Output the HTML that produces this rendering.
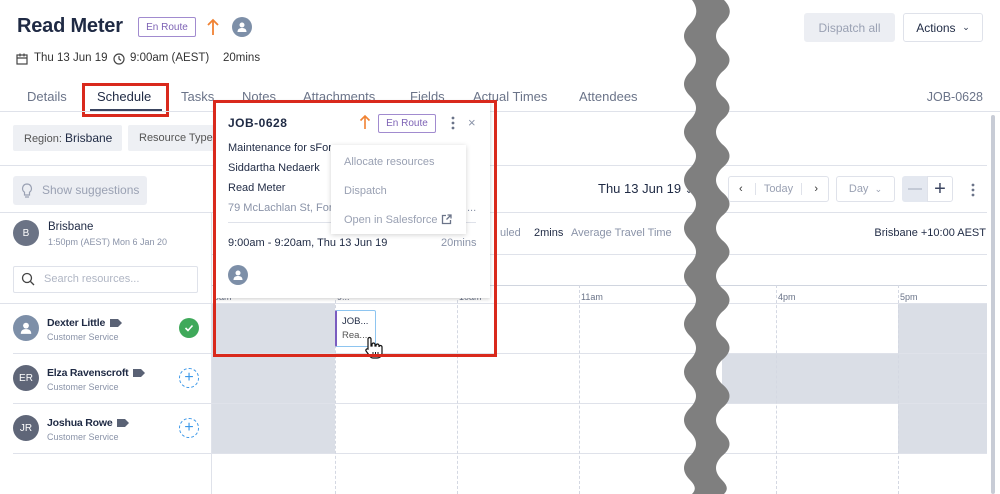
<!DOCTYPE html>
<html><head><meta charset="utf-8"><style>
*{box-sizing:border-box;margin:0;padding:0}
body{width:1000px;height:494px;overflow:hidden;background:#fff;font-family:"Liberation Sans",sans-serif;color:#1f2a44;position:relative}
.a{position:absolute;white-space:nowrap}
.hl{position:absolute;height:1px;background:#dfe2ea}
.vd{position:absolute;width:0;border-left:1px dashed #d4d8e2}
.gray{position:absolute;background:#dadee6}
.av{position:absolute;border-radius:50%;color:#fff;font-size:10px;display:flex;align-items:center;justify-content:center}
.muted{color:#8a93a8}
.btn{position:absolute;border:1px solid #dfe2ea;border-radius:3px;background:#fff;display:flex;align-items:center;justify-content:center;font-size:11px}
.badge{position:absolute;border:1px solid #a18bcf;border-radius:2px;color:#7d62b5;font-size:10px;display:flex;align-items:center;justify-content:center}
.nm{font-size:10.5px;font-weight:bold;letter-spacing:-0.2px;display:flex;align-items:center;gap:5px}
</style></head><body>

<!-- header -->
<div class="a" style="left:17px;top:15px;font-size:20px;font-weight:bold;letter-spacing:-0.2px">Read Meter</div>
<div class="badge" style="left:138px;top:17px;width:58px;height:20px">En Route</div>
<svg class="a" style="left:207px;top:18px" width="12" height="18" viewBox="0 0 12 18"><path d="M6 17V2M1 7l5-5 5 5" stroke="#f08233" stroke-width="1.8" fill="none"/></svg>
<div class="av" style="left:232px;top:17px;width:20px;height:20px;background:#7d8fa8"><svg width="12" height="12" viewBox="0 0 12 12"><circle cx="6" cy="4" r="2.5" fill="#fff"/><path d="M1.5 11c0-3 2-4 4.5-4s4.5 1 4.5 4z" fill="#fff"/></svg></div>

<svg class="a" style="left:16px;top:53px" width="12" height="12" viewBox="0 0 12 12"><rect x="1" y="2" width="10" height="9" fill="none" stroke="#444" stroke-width="1.2"/><path d="M1 5h10M4 0.5v3M8 0.5v3" stroke="#444" stroke-width="1.2"/></svg>
<div class="a" style="left:34px;top:52px;font-size:11.5px;color:#333">Thu 13 Jun 19</div>
<svg class="a" style="left:113px;top:53px" width="12" height="12" viewBox="0 0 12 12"><circle cx="6" cy="6" r="5" fill="none" stroke="#444" stroke-width="1.2"/><path d="M6 3v3l2 1.5" stroke="#444" stroke-width="1.2" fill="none"/></svg>
<div class="a" style="left:130px;top:52px;font-size:11.5px;color:#333">9:00am (AEST)</div>
<div class="a" style="left:223px;top:52px;font-size:11.5px;color:#333">20mins</div>

<div class="btn" style="left:804px;top:13px;width:91px;height:29px;background:#eceef3;border-color:#eceef3;color:#9aa1b3;font-size:12px">Dispatch all</div>
<div class="btn" style="left:903px;top:13px;width:80px;height:29px;font-size:12px;color:#1f2a44">Actions&nbsp;&nbsp;<span style="font-size:9px">&#8964;</span></div>

<!-- tabs -->
<div class="a muted" style="left:27px;top:89px;font-size:13px;color:#6b7489">Details</div>
<div class="a" style="left:97px;top:89px;font-size:13px;color:#1f2a44">Schedule</div>
<div class="a" style="left:90px;top:109px;width:72px;height:2px;background:#3b4560"></div>
<div class="a" style="left:82px;top:83px;width:87px;height:34px;border:3px solid #d9291c"></div>
<div class="a" style="left:181px;top:89px;font-size:13px;color:#6b7489">Tasks</div>
<div class="a" style="left:242px;top:89px;font-size:13px;color:#6b7489">Notes</div>
<div class="a" style="left:303px;top:89px;font-size:13px;color:#6b7489">Attachments</div>
<div class="a" style="left:410px;top:89px;font-size:13px;color:#6b7489">Fields</div>
<div class="a" style="left:473px;top:89px;font-size:13px;color:#6b7489">Actual Times</div>
<div class="a" style="left:579px;top:89px;font-size:13px;color:#6b7489">Attendees</div>
<div class="a" style="right:17px;top:90px;font-size:12.5px;color:#6b7489">JOB-0628</div>
<div class="hl" style="left:0;top:111px;width:1000px"></div>

<!-- filters -->
<div class="a" style="left:13px;top:125px;width:109px;height:26px;background:#eef0f4;border-radius:2px;font-size:11px;line-height:26px;padding-left:11px;color:#555">Region: <span style="color:#1f2a44;font-size:12px">Brisbane</span></div>
<div class="a" style="left:128px;top:125px;width:90px;height:26px;background:#eef0f4;border-radius:2px;font-size:11px;line-height:26px;padding-left:11px;color:#555;overflow:hidden">Resource Type: B</div>
<div class="hl" style="left:0;top:165px;width:987px"></div>

<div class="a" style="left:13px;top:176px;width:134px;height:29px;background:#eceef3;border-radius:3px;font-size:12px;line-height:29px;padding-left:29px;color:#9aa1b3">Show suggestions</div>
<svg class="a" style="left:21px;top:183px" width="12" height="16" viewBox="0 0 12 16"><path d="M6 1a4.5 4.5 0 0 0-2.5 8.2V12h5V9.2A4.5 4.5 0 0 0 6 1zM4 14h4" stroke="#9aa1b3" stroke-width="1.2" fill="none"/></svg>

<div class="a" style="left:598px;top:181px;font-size:13px;color:#1f2a44">Thu 13 Jun 19 <span style="font-size:10px">&#8964;</span></div>
<div class="btn" style="left:728px;top:176px;width:101px;height:26px;color:#9aa1b3;justify-content:space-between;padding:0 10px"><span style="color:#333">&#8249;</span><span style="border-left:1px solid #dfe2ea;border-right:1px solid #dfe2ea;padding:0 8px">Today</span><span style="color:#333">&#8250;</span></div>
<div class="btn" style="left:836px;top:176px;width:59px;height:26px;color:#9aa1b3">Day&nbsp;&nbsp;<span style="font-size:9px">&#8964;</span></div>
<div class="a" style="left:902px;top:176px;width:26px;height:26px;background:#e4e8f0;border-radius:3px 0 0 3px"></div>
<div class="a" style="left:908px;top:188px;width:14px;height:1.5px;background:#c4cad6"></div>
<div class="btn" style="left:927px;top:176px;width:26px;height:26px;font-size:20px;color:#3b4560;border-radius:0 3px 3px 0">+</div>
<svg class="a" style="left:970px;top:182px" width="6" height="16"><circle cx="3" cy="3" r="1.4" fill="#6b7489"/><circle cx="3" cy="8" r="1.4" fill="#6b7489"/><circle cx="3" cy="13" r="1.4" fill="#6b7489"/></svg>
<div class="hl" style="left:0;top:212px;width:987px"></div>

<div class="av" style="left:13px;top:220px;width:26px;height:26px;background:#6b7385">B</div>
<div class="a" style="left:48px;top:221px;font-size:11.5px">Brisbane</div>
<div class="a" style="left:48px;top:237px;font-size:9px;color:#8a93a8">1:50pm (AEST) Mon 6 Jan 20</div>
<div class="a" style="left:500px;top:227px;font-size:11px;color:#8a93a8">uled</div>
<div class="a" style="left:534px;top:227px;font-size:11px">2mins</div>
<div class="a" style="left:571px;top:227px;font-size:11px;color:#8a93a8">Average Travel Time</div>
<div class="a" style="right:14px;top:227px;font-size:11px">Brisbane +10:00 AEST</div>
<div class="hl" style="left:212px;top:254px;width:775px"></div>

<div class="a" style="left:13px;top:266px;width:185px;height:27px;border:1px solid #dfe2ea;border-radius:2px;font-size:11px;line-height:25px;padding-left:30px;color:#b0b6c4">Search resources...</div>
<svg class="a" style="left:21px;top:272px" width="14" height="14" viewBox="0 0 14 14"><circle cx="6" cy="6" r="4.5" stroke="#444" stroke-width="1.3" fill="none"/><path d="M9.5 9.5l3.5 3.5" stroke="#444" stroke-width="1.3"/></svg>

<!-- grid -->
<div class="a" style="left:211px;top:212px;width:1px;height:282px;background:#dfe2ea"></div>
<div class="hl" style="left:0;top:303px;width:987px"></div>
<div class="hl" style="left:212px;top:285px;width:775px;background:#d0d5df"></div>
<div class="gray" style="left:212px;top:304px;width:123px;height:149px"></div>
<div class="gray" style="left:898px;top:304px;width:89px;height:149px"></div>
<div class="gray" style="left:722px;top:353px;width:265px;height:50px"></div>
<div class="hl" style="left:13px;top:353px;width:974px"></div>
<div class="hl" style="left:13px;top:403px;width:974px"></div>
<div class="hl" style="left:13px;top:453px;width:974px"></div>
<div class="vd" style="left:335px;top:285px;height:209px"></div>
<div class="vd" style="left:457px;top:285px;height:209px"></div>
<div class="vd" style="left:579px;top:285px;height:209px"></div>
<div class="vd" style="left:776px;top:285px;height:209px"></div>
<div class="vd" style="left:898px;top:285px;height:209px"></div>
<div class="a" style="left:581px;top:292px;font-size:9px;color:#6b7489">11am</div>
<div class="a" style="left:778px;top:292px;font-size:9px;color:#6b7489">4pm</div>
<div class="a" style="left:900px;top:292px;font-size:9px;color:#6b7489">5pm</div>
<div class="a" style="left:214px;top:292px;font-size:9px;color:#6b7489">9am</div>
<div class="a" style="left:337px;top:292px;font-size:9px;color:#6b7489">9:..</div>
<div class="a" style="left:459px;top:292px;font-size:9px;color:#6b7489">10am</div>
<div class="a" style="left:991px;top:115px;width:4px;height:379px;background:#c8ccd6;border-radius:2px"></div>

<!-- resources -->
<div class="av" style="left:13px;top:315px;width:26px;height:26px;background:#7d8fa8"><svg width="14" height="14" viewBox="0 0 12 12"><circle cx="6" cy="4" r="2.5" fill="#fff"/><path d="M1.5 11c0-3 2-4 4.5-4s4.5 1 4.5 4z" fill="#fff"/></svg></div>
<div class="a nm" style="left:47px;top:317px">Dexter Little <svg width="12" height="8"><path d="M0 0h8l4 4-4 4H0z" fill="#5a6275"/></svg></div>
<div class="a" style="left:47px;top:332px;font-size:9px;color:#8a93a8">Customer Service</div>
<div class="av" style="left:179px;top:318px;width:20px;height:20px;background:#3fa95a"><svg width="10" height="10"><path d="M1.5 5l2.5 2.5 4.5-5" stroke="#fff" stroke-width="1.6" fill="none"/></svg></div>

<div class="av" style="left:13px;top:365px;width:26px;height:26px;background:#5f6678">ER</div>
<div class="a nm" style="left:47px;top:367px">Elza Ravenscroft <svg width="12" height="8"><path d="M0 0h8l4 4-4 4H0z" fill="#5a6275"/></svg></div>
<div class="a" style="left:47px;top:382px;font-size:9px;color:#8a93a8">Customer Service</div>
<div class="av" style="left:179px;top:368px;width:20px;height:20px;border:1px dashed #3b97e8;color:#3b97e8;font-size:16px">+</div>

<div class="av" style="left:13px;top:415px;width:26px;height:26px;background:#5f6678">JR</div>
<div class="a nm" style="left:47px;top:417px">Joshua Rowe <svg width="12" height="8"><path d="M0 0h8l4 4-4 4H0z" fill="#5a6275"/></svg></div>
<div class="a" style="left:47px;top:432px;font-size:9px;color:#8a93a8">Customer Service</div>
<div class="av" style="left:179px;top:418px;width:20px;height:20px;border:1px dashed #3b97e8;color:#3b97e8;font-size:16px">+</div>

<!-- job block -->
<div class="a" style="left:335px;top:310px;width:41px;height:37px;background:#fff;border:1px solid #8ec5f0;border-left:2px solid #7a5cc0;border-radius:2px;font-size:9.5px;padding:4px 0 0 5px;line-height:14px">JOB...<br><span style="color:#555">Rea...</span></div>
<svg class="a" style="left:363px;top:336px" width="20" height="24" viewBox="0 0 20 24"><path d="M5 13V3a1.5 1.5 0 0 1 3 0v7h1V8.5a1.5 1.5 0 0 1 3 0V10h1V9.5a1.5 1.5 0 0 1 3 0V11a1.5 1.5 0 0 1 3 0v6c0 3-2 5-5 5H10c-2 0-3-1-4-3l-3-4a1.5 1.5 0 0 1 2-2z" fill="#fff" stroke="#111" stroke-width="1.2"/><path d="M10 16v4M12.5 16v4M15 16v4" stroke="#111"/></svg>

<!-- popup -->
<div class="a" style="left:215px;top:101px;width:275px;height:197px;background:#fff;box-shadow:0 1px 4px rgba(0,0,0,.2)"></div>
<div class="a" style="left:228px;top:116px;font-size:12px;font-weight:bold;letter-spacing:0.5px">JOB-0628</div>
<svg class="a" style="left:359px;top:114px" width="12" height="16" viewBox="0 0 12 16"><path d="M6 15V2M1.5 6.5L6 2l4.5 4.5" stroke="#f08233" stroke-width="1.6" fill="none"/></svg>
<div class="badge" style="left:378px;top:114px;width:58px;height:19px">En Route</div>
<svg class="a" style="left:450px;top:115px" width="6" height="16"><circle cx="3" cy="3" r="1.4" fill="#6b7489"/><circle cx="3" cy="8" r="1.4" fill="#6b7489"/><circle cx="3" cy="13" r="1.4" fill="#6b7489"/></svg>
<div class="a" style="left:468px;top:115px;font-size:13px;color:#8a93a8">&#215;</div>
<div class="a" style="left:228px;top:142px;font-size:11px">Maintenance for sFore</div>
<div class="a" style="left:228px;top:162px;font-size:11px">Siddartha Nedaerk</div>
<div class="a" style="left:228px;top:182px;font-size:11px">Read Meter</div>
<div class="a" style="left:228px;top:202px;font-size:11px;color:#8a93a8">79 McLachlan St, Forti</div>
<div class="a" style="left:467px;top:202px;font-size:11px;color:#8a93a8">...</div>
<div class="hl" style="left:228px;top:222px;width:248px"></div>
<div class="a" style="left:228px;top:237px;font-size:11px">9:00am - 9:20am, Thu 13 Jun 19</div>
<div class="a" style="left:441px;top:237px;font-size:11px;color:#8a93a8">20mins</div>
<div class="av" style="left:228px;top:265px;width:20px;height:20px;background:#7d8fa8"><svg width="12" height="12" viewBox="0 0 12 12"><circle cx="6" cy="4" r="2.5" fill="#fff"/><path d="M1.5 11c0-3 2-4 4.5-4s4.5 1 4.5 4z" fill="#fff"/></svg></div>

<div class="a" style="left:331px;top:145px;width:135px;height:89px;background:#fff;box-shadow:0 1px 5px rgba(0,0,0,.18)"></div>
<div class="a" style="left:344px;top:156px;font-size:11px;color:#9aa1b3">Allocate resources</div>
<div class="a" style="left:344px;top:185px;font-size:11px;color:#9aa1b3">Dispatch</div>
<div class="a" style="left:344px;top:214px;font-size:11px;color:#9aa1b3">Open in Salesforce</div>
<svg class="a" style="left:441px;top:214px" width="11" height="11" viewBox="0 0 11 11"><path d="M5 1.5H1.5v8h8V6M6.5 1h3.5v3.5M10 1L5.5 5.5" stroke="#6b7489" stroke-width="1.3" fill="none"/></svg>

<div class="a" style="left:213px;top:100px;width:284px;height:257px;border:3px solid #d9291c"></div>

<!-- wavy band -->
<svg class="a" style="left:684px;top:0" width="52" height="494" viewBox="0 0 52 494">
<path d="M8 0 L40 0 C48 8,48 16,38 24 C30 32,30 40,38 48 C48 56,48 64,38 72 C30 80,30 88,38 96 C48 104,48 112,38 120 C30 128,30 136,38 144 C48 152,48 160,38 168 C30 176,30 184,38 192 C48 200,48 208,38 216 C30 224,30 232,38 240 C48 248,48 256,38 264 C30 272,30 280,38 288 C48 296,48 304,38 312 C30 320,30 328,38 336 C48 344,48 352,38 360 C30 368,30 376,38 384 C48 392,48 400,38 408 C30 416,30 424,38 432 C48 440,48 448,38 456 C30 464,30 472,38 480 C44 486,44 490,40 494 L8 494 C12 490,12 486,6 480 C-2 472,-2 464,6 456 C14 448,14 440,6 432 C-2 424,-2 416,6 408 C14 400,14 392,6 384 C-2 376,-2 368,6 360 C14 352,14 344,6 336 C-2 328,-2 320,6 312 C14 304,14 296,6 288 C-2 280,-2 272,6 264 C14 256,14 248,6 240 C-2 232,-2 224,6 216 C14 208,14 200,6 192 C-2 184,-2 176,6 168 C14 160,14 152,6 144 C-2 136,-2 128,6 120 C14 112,14 104,6 96 C-2 88,-2 80,6 72 C14 64,14 56,6 48 C-2 40,-2 32,6 24 C14 16,14 8,8 0 Z" fill="#7f7f7f"/>
</svg>
</body></html>
